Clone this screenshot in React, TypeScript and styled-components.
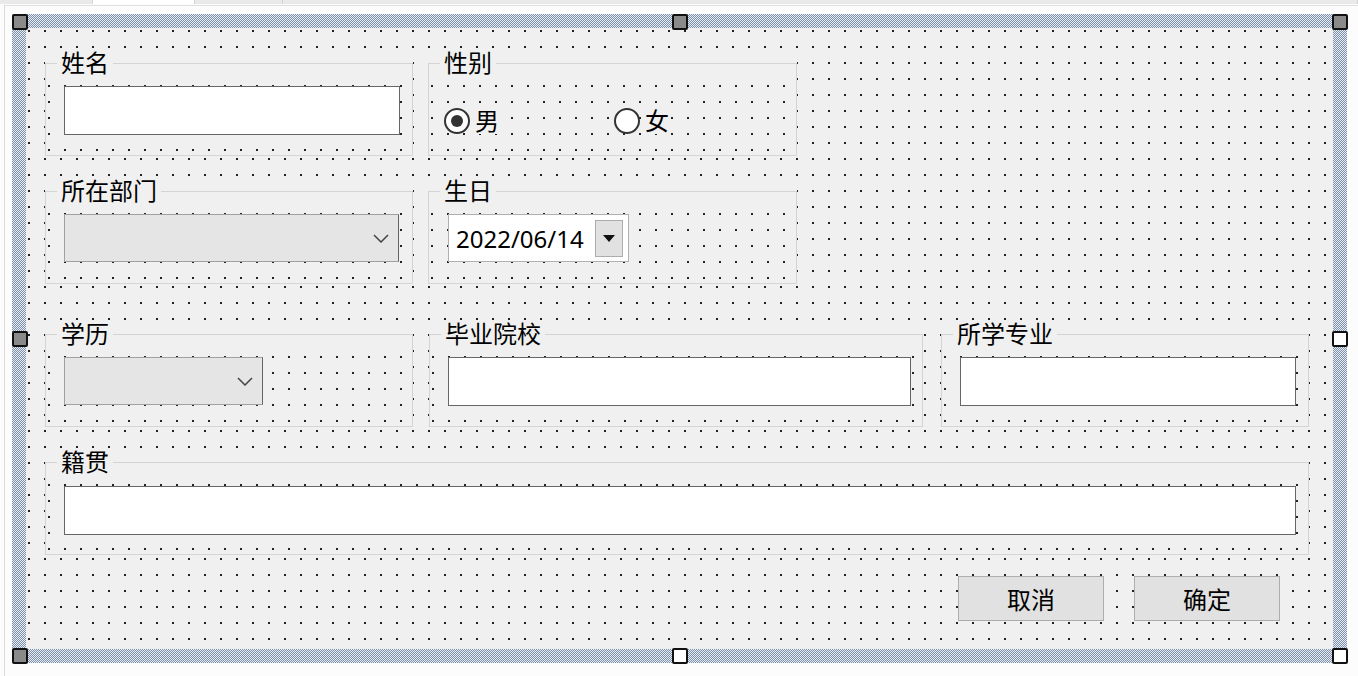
import React from "react";
import styled, { createGlobalStyle, css } from "styled-components";

const Global = createGlobalStyle`
  html, body { margin: 0; padding: 0; background: #fcfcfc; }
  body { font-family: "Noto Sans", "Noto Sans CJK SC", sans-serif; color: #000; }
  * { box-sizing: border-box; }
`;

const dots = (x: number, y: number) => css`
  background-color: #f0f0f0;
  background-image: linear-gradient(to right, transparent 2px, #f0f0f0 2px),
    linear-gradient(to bottom, #222 2px, #f0f0f0 2px);
  background-size: 16px 16px;
  background-position: ${x}px ${y}px, ${x}px ${y}px;
`;

const Page = styled.div`
  width: 1358px;
  height: 676px;
  display: flex;
  flex-direction: column;
  overflow: hidden;
  background: #fcfcfc;
`;

const TabStrip = styled.div`
  display: flex;
  height: 4px;
  flex: none;
`;

const Tab = styled.div<{ $w?: number; $active?: boolean }>`
  ${(p) => (p.$w ? `width: ${p.$w}px; flex: none;` : "flex: 1;")}
  background: ${(p) => (p.$active ? "#ffffff" : "#e9e9e9")};
  border-right: 1px solid #d4d4d4;
`;

const Surface = styled.div`
  flex: 1;
  margin: 1px 0 0 4px;
  border-left: 1px solid #dadada;
  border-top: 1px solid #e0e0e0;
  padding: 8px 0 0 7px;
`;

const Frame = styled.div`
  position: relative;
  width: 1335px;
  height: 649px;
  padding: 14px;
  background: repeating-conic-gradient(#7f91a8 0 25%, #e6ecf3 0 50%) 0 0 / 2px 2px;
`;

const Handle = styled.span<{ $x: "s" | "m" | "e"; $y: "s" | "m" | "e"; $fill?: boolean }>`
  position: absolute;
  width: 16px;
  height: 16px;
  border: 2px solid #111;
  border-radius: 2px;
  background: ${(p) => (p.$fill ? "#8a8a8a" : "#ffffff")};
  ${(p) =>
    p.$x === "s" ? "left: 0;" : p.$x === "m" ? "left: 50%; margin-left: -8px;" : "right: -1px;"}
  ${(p) =>
    p.$y === "s" ? "top: 0;" : p.$y === "m" ? "top: 50%; margin-top: -8px;" : "bottom: -1px;"}
`;

const Client = styled.div`
  height: 100%;
  padding: 23px 0 0 19px;
  display: flex;
  flex-direction: column;
  ${dots(2, 2)}
`;

const Row = styled.div<{ $mt: number }>`
  display: flex;
  margin-top: ${(p) => p.$mt}px;
  height: 105px;
  flex: none;
`;

const Group = styled.div<{ $w: number; $ml?: number }>`
  width: ${(p) => p.$w}px;
  margin-left: ${(p) => p.$ml ?? 0}px;
  height: 105px;
  flex: none;
  background: #f0f0f0;
`;

const Fieldset = styled.fieldset`
  margin: 0;
  padding: 0;
  height: 100%;
  min-width: 0;
  border: 1px solid #d4d4d4;
`;

const Legend = styled.legend`
  margin-left: 11px;
  padding: 0 4px;
  font-size: 24px;
  line-height: 24px;
  color: #000;
`;

const Body = styled.div<{ $pl: number; $pt: number }>`
  height: 80px;
  padding: ${(p) => p.$pt}px 0 0 ${(p) => p.$pl}px;
  display: flex;
  align-items: flex-start;
  ${dots(2, 10)}
`;

const TextBox = styled.div<{ $w: number }>`
  width: ${(p) => p.$w}px;
  height: 49px;
  flex: none;
  background: #ffffff;
  border: 1px solid #666;
`;

const Combo = styled.div<{ $w: number }>`
  width: ${(p) => p.$w}px;
  height: 48px;
  flex: none;
  background: #e5e5e5;
  border: 1px solid #a0a0a0;
  border-right-color: #666;
  display: flex;
  align-items: center;
  justify-content: flex-end;
  padding-right: 9px;
`;

const DatePicker = styled.div`
  width: 181px;
  height: 48px;
  flex: none;
  background: #ffffff;
  border: 1px solid #b0b0b0;
  display: flex;
  align-items: center;
  justify-content: space-between;
  padding: 0 5px 0 7px;
  font-size: 24px;
  color: #000;
`;

const DropButton = styled.div`
  width: 28px;
  height: 37px;
  background: #e1e1e1;
  border: 1px solid #acacac;
  display: flex;
  align-items: center;
  justify-content: center;
`;

const RadioItem = styled.div<{ $w: number }>`
  width: ${(p) => p.$w}px;
  display: flex;
  align-items: center;
  flex: none;
`;

const RadioCircle = styled.span<{ $checked?: boolean }>`
  width: 26px;
  height: 26px;
  border-radius: 50%;
  border: 2px solid #333;
  background: #fff;
  display: flex;
  align-items: center;
  justify-content: center;
  &::after {
    content: "";
    width: 12px;
    height: 12px;
    border-radius: 50%;
    background: ${(p) => (p.$checked ? "#333" : "transparent")};
  }
`;

const RadioLabel = styled.span`
  margin-left: 5px;
  font-size: 24px;
  line-height: 26px;
  background: #f0f0f0;
  color: #000;
`;

const ButtonRow = styled.div`
  display: flex;
  justify-content: flex-end;
  gap: 30px;
  margin-top: 21px;
  padding-right: 53px;
`;

const Button = styled.button`
  width: 146px;
  height: 45px;
  padding: 0;
  background: #e1e1e1;
  border: 1px solid #adadad;
  border-radius: 0;
  font-family: "Noto Sans", "Noto Sans CJK SC", sans-serif;
  font-size: 24px;
  color: #000;
`;

const Chevron = () => (
  <svg width="16" height="9" viewBox="0 0 16 9">
    <path d="M1 1 L8 8 L15 1" fill="none" stroke="#444" strokeWidth="1.5" />
  </svg>
);

const DownTriangle = () => (
  <svg width="12" height="7" viewBox="0 0 12 7">
    <polygon points="0,0 12,0 6,7" fill="#111" />
  </svg>
);

type BoxProps = { label: string; w: number; ml?: number; pl?: number; pt?: number; children: React.ReactNode };

const Box = ({ label, w, ml, pl = 18, pt = 11, children }: BoxProps) => (
  <Group $w={w} $ml={ml}>
    <Fieldset>
      <Legend>{label}</Legend>
      <Body $pl={pl} $pt={pt}>{children}</Body>
    </Fieldset>
  </Group>
);

export default function App() {
  return (
    <>
      <Global />
      <Page>
        <TabStrip>
          <Tab $w={93} />
          <Tab $w={102} $active />
          <Tab $w={88} />
          <Tab />
        </TabStrip>
        <Surface>
          <Frame>
            <Client>
              <Row $mt={0}>
                <Box label="姓名" w={368}>
                  <TextBox $w={336} />
                </Box>
                <Box label="性别" w={369} ml={15} pl={15} pt={33}>
                  <RadioItem $w={170}>
                    <RadioCircle $checked />
                    <RadioLabel>男</RadioLabel>
                  </RadioItem>
                  <RadioItem $w={80}>
                    <RadioCircle />
                    <RadioLabel>女</RadioLabel>
                  </RadioItem>
                </Box>
              </Row>
              <Row $mt={23}>
                <Box label="所在部门" w={368}>
                  <Combo $w={335}>
                    <Chevron />
                  </Combo>
                </Box>
                <Box label="生日" w={369} ml={15} pl={19}>
                  <DatePicker>
                    <span>2022/06/14</span>
                    <DropButton>
                      <DownTriangle />
                    </DropButton>
                  </DatePicker>
                </Box>
              </Row>
              <Row $mt={38}>
                <Box label="学历" w={368}>
                  <Combo $w={199}>
                    <Chevron />
                  </Combo>
                </Box>
                <Box label="毕业院校" w={494} ml={16}>
                  <TextBox $w={463} />
                </Box>
                <Box label="所学专业" w={368} ml={18}>
                  <TextBox $w={336} />
                </Box>
              </Row>
              <Row $mt={23}>
                <Box label="籍贯" w={1264} pt={12}>
                  <TextBox $w={1232} />
                </Box>
              </Row>
              <ButtonRow>
                <Button>取消</Button>
                <Button>确定</Button>
              </ButtonRow>
            </Client>
            <Handle $x="s" $y="s" $fill />
            <Handle $x="m" $y="s" $fill />
            <Handle $x="e" $y="s" $fill />
            <Handle $x="s" $y="m" $fill />
            <Handle $x="e" $y="m" />
            <Handle $x="s" $y="e" $fill />
            <Handle $x="m" $y="e" />
            <Handle $x="e" $y="e" />
          </Frame>
        </Surface>
      </Page>
    </>
  );
}
